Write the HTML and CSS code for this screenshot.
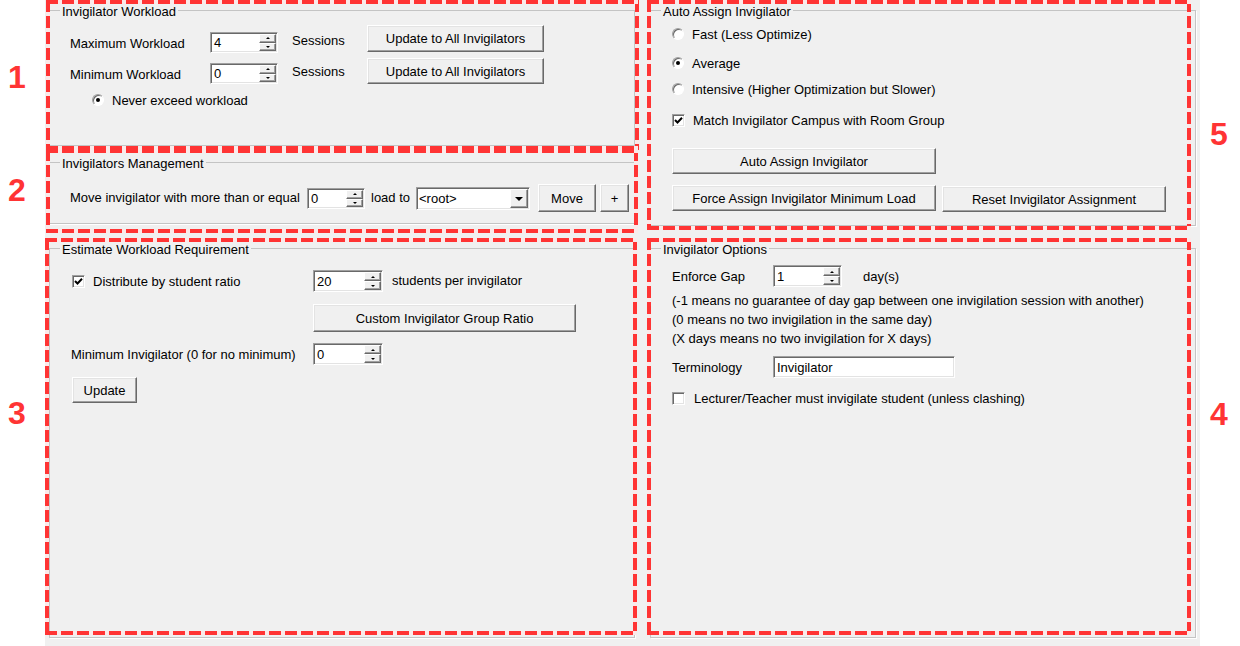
FILE: index.html
```html
<!DOCTYPE html>
<html>
<head>
<meta charset="utf-8">
<title>Invigilator Settings</title>
<link rel="stylesheet" href="styles.css">
</head>
<body>
<div class="screen">
  <div class="gutter gutter-left">
    <div class="tag tag-1">1</div>
    <div class="tag tag-2">2</div>
    <div class="tag tag-3">3</div>
  </div>

  <div class="panel">
    <div class="col col-left">
      <div class="section s1">
        <fieldset class="gb">
          <legend>Invigilator Workload</legend>
          <div class="gb-body b1">
            <div class="row">
              <span class="lbl lbl-wl lbl-max">Maximum Workload</span>
              <div class="field spin-field sf-wl sf-max"><span class="val">4</span><span class="spinner"><span class="sp up"><i></i></span><span class="sp dn"><i></i></span></span></div>
              <span class="lbl lbl-sess lbl-sess1">Sessions</span>
              <button class="btn btn-upd btn-upd1">Update to All Invigilators</button>
            </div>
            <div class="row row-min">
              <span class="lbl lbl-wl lbl-min">Minimum Workload</span>
              <div class="field spin-field sf-wl sf-min"><span class="val">0</span><span class="spinner"><span class="sp up"><i></i></span><span class="sp dn"><i></i></span></span></div>
              <span class="lbl lbl-sess lbl-sess2">Sessions</span>
              <button class="btn btn-upd btn-upd2">Update to All Invigilators</button>
            </div>
            <div class="opt opt-never">
              <span class="radio on"><span></span></span>
              <span>Never exceed workload</span>
            </div>
          </div>
        </fieldset>
      </div>

      <div class="section s2">
        <fieldset class="gb">
          <legend>Invigilators Management</legend>
          <div class="gb-body b2">
            <div class="row">
              <span class="lbl lbl-move">Move invigilator with more than or equal</span>
              <div class="field spin-field sf-move"><span class="val">0</span><span class="spinner"><span class="sp up"><i></i></span><span class="sp dn"><i></i></span></span></div>
              <span class="lbl lbl-load">load to</span>
              <div class="field combo"><span class="val">&lt;root&gt;</span><span class="drop"><i></i></span></div>
              <button class="btn btn-move">Move</button>
              <button class="btn btn-plus">+</button>
            </div>
          </div>
        </fieldset>
      </div>

      <div class="section s3">
        <fieldset class="gb">
          <legend>Estimate Workload Requirement</legend>
          <div class="gb-body b3">
            <div class="row">
              <div class="check-item ci-dist">
                <span class="check on"><svg viewBox="0 0 11 11" width="11" height="11"><polyline points="2,5 4.5,7.5 9,2.8" fill="none" stroke="#000" stroke-width="2"/></svg></span>
                <span>Distribute by student ratio</span>
              </div>
              <div class="field spin-field sf-ratio"><span class="val">20</span><span class="spinner"><span class="sp up"><i></i></span><span class="sp dn"><i></i></span></span></div>
              <span class="lbl lbl-stu">students per invigilator</span>
            </div>
            <button class="btn btn-custom">Custom Invigilator Group Ratio</button>
            <div class="row row-minv">
              <span class="lbl lbl-minv">Minimum Invigilator (0 for no minimum)</span>
              <div class="field spin-field sf-ratio"><span class="val">0</span><span class="spinner"><span class="sp up"><i></i></span><span class="sp dn"><i></i></span></span></div>
            </div>
            <button class="btn btn-update">Update</button>
          </div>
        </fieldset>
      </div>
    </div>

    <div class="col col-right">
      <div class="section s5">
        <fieldset class="gb">
          <legend>Auto Assign Invigilator</legend>
          <div class="gb-body b5">
            <div class="opt opt-fast">
              <span class="radio"><span></span></span>
              <span>Fast (Less Optimize)</span>
            </div>
            <div class="opt opt-avg">
              <span class="radio on"><span></span></span>
              <span>Average</span>
            </div>
            <div class="opt opt-int">
              <span class="radio"><span></span></span>
              <span>Intensive (Higher Optimization but Slower)</span>
            </div>
            <div class="opt opt-match">
              <span class="check on"><svg viewBox="0 0 11 11" width="11" height="11"><polyline points="2,5 4.5,7.5 9,2.8" fill="none" stroke="#000" stroke-width="2"/></svg></span>
              <span>Match Invigilator Campus with Room Group</span>
            </div>
            <button class="btn btn-auto">Auto Assign Invigilator</button>
            <div class="row row-force">
              <button class="btn btn-force">Force Assign Invigilator Minimum Load</button>
              <button class="btn btn-reset">Reset Invigilator Assignment</button>
            </div>
          </div>
        </fieldset>
      </div>

      <div class="section s4">
        <fieldset class="gb">
          <legend>Invigilator Options</legend>
          <div class="gb-body b4">
            <div class="row">
              <span class="lbl lbl-opt lbl-gap">Enforce Gap</span>
              <div class="field spin-field sf-gap"><span class="val">1</span><span class="spinner"><span class="sp up"><i></i></span><span class="sp dn"><i></i></span></span></div>
              <span class="lbl lbl-days">day(s)</span>
            </div>
            <div class="notes">
              <p>(-1 means no guarantee of day gap between one invigilation session with another)</p>
              <p>(0 means no two invigilation in the same day)</p>
              <p>(X days means no two invigilation for X days)</p>
            </div>
            <div class="row row-term">
              <span class="lbl lbl-opt lbl-term">Terminology</span>
              <div class="field textbox"><span class="val">Invigilator</span></div>
            </div>
            <div class="opt opt-lect">
              <span class="check"></span>
              <span>Lecturer/Teacher must invigilate student (unless clashing)</span>
            </div>
          </div>
        </fieldset>
      </div>
    </div>
  </div>

  <div class="gutter gutter-right">
    <div class="tag tag-5">5</div>
    <div class="tag tag-4">4</div>
  </div>
</div>
</body>
</html>
```

FILE: styles.css
```css
* { box-sizing: border-box; }
html, body { margin: 0; padding: 0; background: #fff; }
body {
  font-family: "Liberation Sans", Arial, sans-serif;
  font-size: 13px;
  line-height: 15px;
  color: #000;
}

.screen { display: flex; width: 1240px; height: 646px; overflow: hidden; }

/* annotation numbers */
.gutter { display: flex; flex-direction: column; }
.gutter-left { width: 45px; padding: 61px 0 0 8px; }
.gutter-right { width: 40px; padding: 118px 0 0 10px; }
.tag { color: #ff3434; font-weight: bold; font-size: 32px; line-height: 32px; }
.tag-2 { margin-top: 81px; }
.tag-3 { margin-top: 191px; }
.tag-4 { margin-top: 248px; }

/* form surface */
.panel {
  width: 1155px;
  background: #f0f0f0;
  display: flex;
  gap: 15px;
  padding: 0 4px;
}
.col { display: flex; flex-direction: column; }
.col-left { width: 586px; }
.col-right { width: 546px; }

.section { position: relative; }
.s1 { margin-top: 1px; height: 145px; }
.s2 { margin-top: 7px; height: 71px; }
.s3 { margin-top: 15px; height: 399px; }
.s5 { margin-top: 1px; height: 225px; }
.s4 { margin-top: 13px; height: 399px; }

/* red dashed annotation frames */
.section::after {
  content: "";
  position: absolute;
  pointer-events: none;
  background:
    repeating-linear-gradient(90deg, #ff3434 0 12px, #fbe9e9 12px 16px) top left / 100% 4px no-repeat,
    repeating-linear-gradient(90deg, #ff3434 0 12px, #fbe9e9 12px 16px) bottom left / 100% 4px no-repeat,
    repeating-linear-gradient(180deg, #ff3434 0 12px, #fbe9e9 12px 16px) top left / 4px 100% no-repeat,
    repeating-linear-gradient(180deg, #ff3434 0 12px, #fbe9e9 12px 16px) top right / 4px 100% no-repeat;
}
.s1::after { left: -3px; right: -4px; top: -1px; bottom: -4px; }
.s2::after { left: -3px; right: -3px; top: -4px; bottom: -9px; }
.s3::after { left: -4px; right: -2px; top: -1px; bottom: 3px; }
.s5::after { left: -3px; right: 5px; top: -1px; bottom: -4px; }
.s4::after { left: -3px; right: 5px; top: -1px; bottom: 3px; }

/* group boxes */
.gb {
  margin: 0;
  padding: 0;
  height: 100%;
  min-width: 0;
  border: 1px solid #c4c4c4;
  box-shadow: 1px 1px 0 #fff;
}
.gb legend {
  margin-left: 10px;
  padding: 4px 2px 0;
  line-height: 14px;
  font-size: 13px;
}
.b1 { padding: 6px 0 0 20px; }
.b2 { padding: 13px 0 0 20px; }
.b3 { padding: 13px 0 0 20px; }
.b5 { padding: 7px 0 0 21px; }
.b4 { padding: 8px 0 0 21px; }

.row { display: flex; align-items: flex-start; }
.lbl { white-space: nowrap; }

/* sunken fields */
.field {
  background: #fff;
  border: 1px solid;
  border-color: #a0a0a0 #fff #fff #a0a0a0;
  box-shadow: inset 1px 1px 0 #696969, inset -1px -1px 0 #e3e3e3;
  display: flex;
  align-items: stretch;
}
.field .val { flex: 1; display: flex; align-items: center; padding-left: 3px; white-space: nowrap; }
.spinner { width: 18px; display: flex; flex-direction: column; padding: 1px 1px 1px 0; }
.sp {
  flex: 1;
  background: #f0f0f0;
  border: 1px solid;
  border-color: #fff #696969 #696969 #fff;
  box-shadow: inset -1px -1px 0 #a0a0a0;
  display: flex;
  align-items: center;
  justify-content: center;
}
.sp i { width: 0; height: 0; border-left: 2px solid transparent; border-right: 2px solid transparent; }
.sp.up i { border-bottom: 2px solid #000; }
.sp.dn i { border-top: 2px solid #000; }

.combo { width: 114px; height: 23px; margin-top: 3px; }
.combo .val { padding-left: 2px; }
.drop {
  width: 18px;
  margin: 1px 1px 1px 0;
  background: #f0f0f0;
  border: 1px solid;
  border-color: #fff #696969 #696969 #fff;
  box-shadow: inset -1px -1px 0 #a0a0a0;
  display: flex;
  align-items: center;
  justify-content: center;
}
.drop i { width: 0; height: 0; border-left: 4px solid transparent; border-right: 4px solid transparent; border-top: 4px solid #000; }
.textbox { width: 182px; height: 22px; }

/* raised buttons */
.btn {
  font: inherit;
  color: #000;
  background: #f0f0f0;
  border: 1px solid;
  border-color: #fff #696969 #696969 #fff;
  box-shadow: inset -1px -1px 0 #a0a0a0, inset 1px 1px 0 #e3e3e3;
  padding: 0;
  margin: 0;
  display: flex;
  align-items: center;
  justify-content: center;
  white-space: nowrap;
}

/* radios and checks */
.opt { display: flex; align-items: center; gap: 8px; height: 16px; }
.radio {
  width: 12px;
  height: 12px;
  border-radius: 50%;
  background: #fff;
  border: 1px solid;
  border-color: #a0a0a0 #fff #fff #a0a0a0;
  box-shadow: inset 1px 1px 0 #696969;
  display: flex;
  align-items: center;
  justify-content: center;
  flex: none;
}
.radio span { width: 4px; height: 4px; border-radius: 50%; }
.radio.on span { background: #000; }
.check {
  width: 13px;
  height: 13px;
  background: #fff;
  border: 1px solid;
  border-color: #a0a0a0 #fff #fff #a0a0a0;
  box-shadow: inset 1px 1px 0 #696969, inset -1px -1px 0 #e3e3e3;
  display: flex;
  flex: none;
}
.check-item { display: flex; align-items: center; gap: 8px; height: 15px; }

/* group 1 */
.lbl-wl { width: 140px; }
.lbl-max { margin-top: 11px; }
.lbl-min { margin-top: 9px; }
.sf-wl { width: 68px; height: 21px; }
.sf-max { margin-top: 7px; }
.sf-min { margin-top: 5px; }
.lbl-sess { width: 75px; margin-left: 14px; }
.lbl-sess1 { margin-top: 8px; }
.lbl-sess2 { margin-top: 6px; }
.btn-upd { width: 177px; }
.btn-upd1 { height: 27px; }
.btn-upd2 { height: 26px; }
.row-min { margin-top: 5px; }
.opt-never { margin-top: 8px; padding-left: 22px; }

/* group 2 */
.lbl-move { width: 237px; margin-top: 6px; }
.sf-move { width: 58px; height: 21px; margin-top: 4px; }
.lbl-load { width: 45px; margin-left: 6px; margin-top: 6px; }
.btn-move { width: 58px; height: 28px; margin-left: 8px; }
.btn-plus { width: 29px; height: 28px; margin-left: 4px; }

/* group 3 */
.ci-dist { width: 243px; padding-left: 2px; margin-top: 4px; }
.sf-ratio { width: 70px; height: 22px; }
.lbl-stu { margin-left: 9px; margin-top: 3px; }
.btn-custom { width: 263px; height: 28px; margin: 12px 0 0 243px; }
.row-minv { margin-top: 11px; }
.lbl-minv { width: 242px; margin-left: 1px; margin-top: 4px; }
.btn-update { width: 65px; height: 26px; margin: 12px 0 0 2px; }

/* group 5 */
.opt-avg { margin-top: 13px; }
.opt-int { margin-top: 10px; }
.opt-match { margin-top: 15px; }
.btn-auto { width: 264px; height: 26px; margin-top: 20px; }
.row-force { margin-top: 11px; }
.btn-force { width: 264px; height: 26px; }
.btn-reset { width: 224px; height: 26px; margin: 1px 0 0 6px; }

/* group 4 */
.lbl-opt { width: 101px; margin-top: 4px; }
.sf-gap { width: 69px; height: 22px; }
.lbl-days { margin-left: 21px; margin-top: 4px; }
.notes { margin-top: 4px; }
.notes p { margin: 0; line-height: 19px; white-space: nowrap; }
.row-term { margin-top: 8px; }
.opt-lect { margin-top: 13px; gap: 9px; height: 15px; }
```
